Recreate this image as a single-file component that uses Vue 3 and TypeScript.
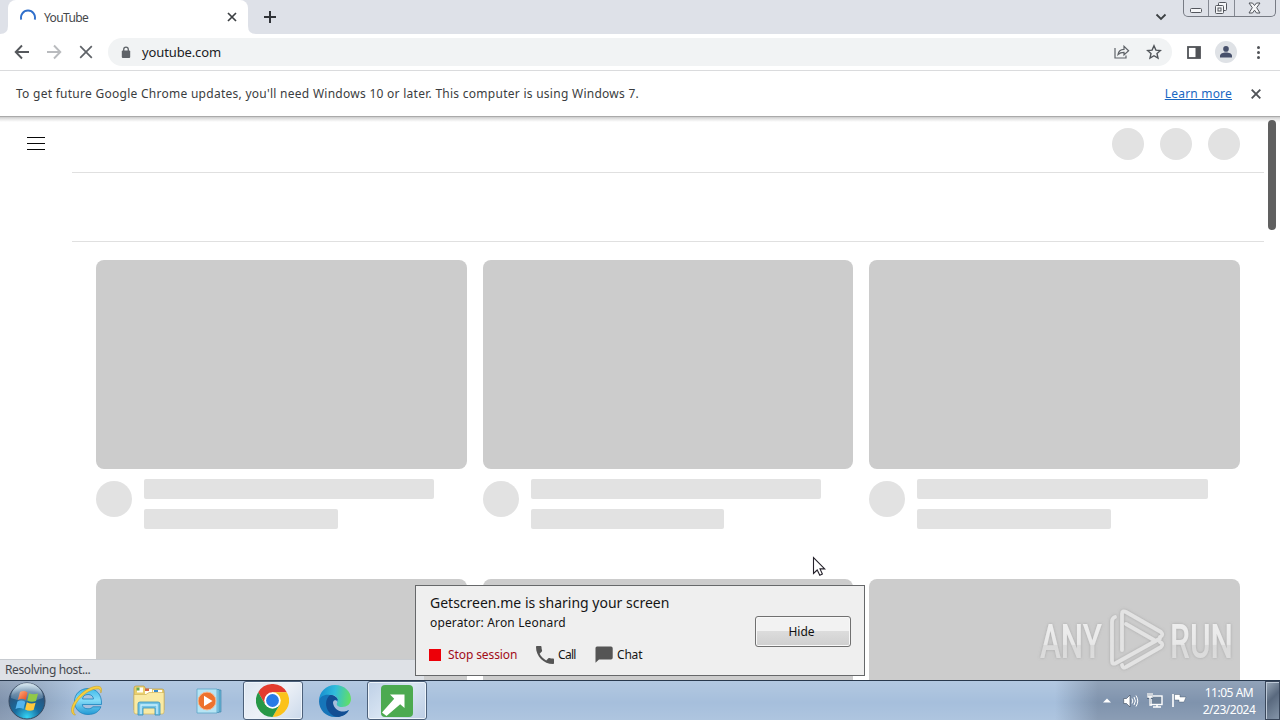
<script setup lang="ts">
interface Video { id: number }
const rows: Video[][] = [
  [{ id: 1 }, { id: 2 }, { id: 3 }],
  [{ id: 4 }, { id: 5 }, { id: 6 }],
]
const avatars = [1, 2, 3]
</script>

<template>
  <div class="desktop">
    <header class="tabstrip">
      <div class="tab">
        <svg class="spinner" width="16" height="16" viewBox="0 0 16 16"><path d="M1.3 11.2A7 7 0 1 1 14.7 11.2" transform="translate(0 -.6)" fill="none" stroke="#2f6fcb" stroke-width="1.9" /></svg>
        <span class="tab-title">YouTube</span>
        <svg class="tab-close" width="10" height="10" viewBox="0 0 10 10"><path d="M1 1l8 8M9 1L1 9" stroke="#3c4043" stroke-width="1.7" /></svg>
        <svg class="tab-foot" width="8" height="8" viewBox="0 0 8 8"><path d="M0 0Q0 8 8 8H0Z" fill="#fff" /></svg>
        <svg class="tab-foot left" width="8" height="8" viewBox="0 0 8 8"><path d="M8 0Q8 8 0 8H8Z" fill="#fff" /></svg>
      </div>
      <svg class="plus" width="12" height="12" viewBox="0 0 12 12"><path d="M6 0v12M0 6h12" stroke="#303338" stroke-width="2" /></svg>
      <svg class="chevron" width="12" height="8" viewBox="0 0 12 8"><path d="M1.5 1.5L6 6l4.500-4.500" fill="none" stroke="#3c4043" stroke-width="1.8" /></svg>
      <div class="caption">
        <span class="cap min"><svg width="12" height="6" viewBox="0 0 12 6"><rect x=".5" y=".5" width="11" height="4" rx="1" fill="#f5f6f8" stroke="#53565d" /></svg></span>
        <span class="cap max"><svg width="14" height="14" viewBox="0 0 14 14"><g fill="#f5f6f8" stroke="#53565d"><rect x="4.500" y="1.500" width="8" height="8" rx="1" /><rect x="1.500" y="4.500" width="8" height="8" rx="1" /><rect x="4" y="7" width="3" height="3" /></g></svg></span>
        <span class="cap cls"><svg width="13" height="12" viewBox="0 0 13 12"><path d="M1 1h3.500l2 2.500 2-2.500H12L8.700 5.700 12 11H8.500l-2-2.800-2 2.800H1l3.300-5.300z" fill="#f5f6f8" stroke="#53565d" /></svg></span>
      </div>
    </header>

    <nav class="toolbar">
      <svg class="nav-icon" width="16" height="16" viewBox="0 0 16 16"><path d="M15 8H2M8 1.500L1.700 8 8 14.500" fill="none" stroke="#55585c" stroke-width="1.9" /></svg>
      <svg class="nav-icon" width="16" height="16" viewBox="0 0 16 16"><path d="M1 8h13M8 1.500L14.300 8 8 14.500" fill="none" stroke="#b9bbbe" stroke-width="1.9" /></svg>
      <svg class="nav-icon" width="16" height="16" viewBox="0 0 16 16"><path d="M2.200 2.200l11.600 11.600M13.800 2.200L2.200 13.800" stroke="#5f6368" stroke-width="1.700" /></svg>
      <div class="omnibox">
        <svg class="lock" width="10" height="13" viewBox="0 0 10 13"><rect x=".8" y="4.500" width="8.400" height="7.500" rx="1" fill="#5f6368" /><path d="M2.700 5V3.400a2.300 2.300 0 0 1 4.600 0V5" fill="none" stroke="#5f6368" stroke-width="1.300" /></svg>
        <span class="url">youtube.com</span>
        <svg class="share" width="16" height="14" viewBox="0 0 16 14"><path d="M1 3v10h11v-2.500M4 9.500C4.500 6 6.500 4.500 10 4.400V1.300l4.600 4.500L10 10V7.300C7.300 7.300 5.500 8 4 9.500z" fill="none" stroke="#5f6368" stroke-width="1.200" /></svg>
        <svg class="star" width="16" height="16" viewBox="0 0 16 16"><path d="M8 1.800l1.900 4.300 4.600.4-3.500 3.100 1 4.500L8 11.700l-4 2.400 1-4.500-3.500-3.100 4.600-.4z" fill="none" stroke="#505459" stroke-width="1.400" /></svg>
      </div>
      <svg class="panel" width="14" height="13" viewBox="0 0 14 13"><rect x="1" y="1" width="12" height="11" fill="#fff" stroke="#505357" stroke-width="1.800" /><path d="M8.500 1H13v11H8.500z" fill="#505357" /></svg>
      <span class="profile"><svg width="12" height="12" viewBox="0 0 12 12"><circle cx="6" cy="2.900" r="2.800" fill="#47506b" /><path d="M0 11.500V10c0-2.300 3-3.400 6-3.400s6 1.100 6 3.400v1.500z" fill="#47506b" /></svg></span>
      <span class="dots"><i></i><i></i><i></i></span>
    </nav>

    <section class="infobar">
      <span class="notice">To get future Google Chrome updates, you'll need Windows 10 or later. This computer is using Windows 7.</span>
      <a class="learn">Learn more</a>
      <svg width="10" height="10" viewBox="0 0 10 10"><path d="M.7.700l8.600 8.600M9.300.700L.7 9.300" stroke="#505357" stroke-width="1.900" /></svg>
    </section>

    <main class="page">
      <div class="masthead">
        <span class="burger"><i></i><i></i><i></i></span>
        <div class="avatars"><span v-for="a in avatars" :key="a"></span></div>
      </div>
      <div class="chips"></div>
      <div v-for="(row, r) in rows" :key="r" class="videos">
        <article v-for="v in row" :key="v.id">
          <div class="thumb"></div>
          <div class="meta">
            <span class="channel"></span>
            <div class="lines"><span class="line"></span><span class="line short"></span></div>
          </div>
        </article>
      </div>
      <div class="scroll-thumb"></div>
      <div class="status"><span>Resolving host...</span></div>
      <svg class="watermark" width="210" height="76" viewBox="0 0 210 76">
        <defs>
          <linearGradient id="wm" x1="0" y1="0" x2="0" y2="1"><stop offset="0" stop-color="#f0f0f0" /><stop offset=".55" stop-color="#e8e8e8" /><stop offset=".57" stop-color="#dadada" /><stop offset="1" stop-color="#dedede" /></linearGradient>
          <filter id="wms" x="-10%" y="-10%" width="120%" height="120%"><feDropShadow dx="0" dy="0" stdDeviation="1.500" flood-color="#888" flood-opacity=".55" /></filter>
        </defs>
        <g filter="url(#wms)">
          <text x="9" y="55" textLength="62" lengthAdjust="spacingAndGlyphs" fill="url(#wm)">ANY</text>
          <text x="139" y="55" textLength="63" lengthAdjust="spacingAndGlyphs" fill="url(#wm)">RUN</text>
          <path d="M84 14Q81 15 81 19V58Q81 62 85 60L129 35.500M91 47V11Q91 7 95 9L130 29Q133 32 129 34M95 21L123 37M91 62Q92 66 95 64L130 44Q133 41 129 39" fill="none" stroke="#e3e3e3" stroke-width="3.800" stroke-linejoin="round" stroke-linecap="round" />
        </g>
      </svg>
      <svg class="cursor" width="14" height="22" viewBox="0 0 14 22"><path d="M1.500 1.500v16l3.700-3.500 2.600 5.300 2.600-1.200L8 12.900h4.700z" fill="#fff" stroke="#25222b" stroke-width="1.100" /></svg>
      <aside class="share-panel">
        <div class="panel-info">
          <div class="panel-title">Getscreen.me is sharing your screen</div>
          <div class="operator">operator: Aron Leonard</div>
          <div class="actions">
            <span class="stop-box"></span><span class="stop-text">Stop session</span>
            <svg class="phone" width="18" height="18" viewBox="3 3 18 18"><path d="M6.620 10.790c1.440 2.830 3.760 5.140 6.590 6.590l2.200-2.200c.27-.27.670-.36 1.020-.24 1.120.37 2.330.57 3.570.57.550 0 1 .45 1 1V20c0 .55-.45 1-1 1-9.390 0-17-7.610-17-17 0-.55.450-1 1-1h3.500c.55 0 1 .45 1 1 0 1.250.2 2.450.57 3.570.11.350.03.740-.25 1.020z" fill="#555" /></svg>
            <span class="call-text">Call</span>
            <svg class="bubble" width="18" height="17" viewBox="0 0 18 17"><path d="M2 .500h14a1.700 1.700 0 0 1 1.700 1.700v9.600a1.700 1.700 0 0 1-1.700 1.700H4L.5 16.700V2A1.500 1.500 0 0 1 2 .500z" fill="#555" /></svg>
            <span class="chat-text">Chat</span>
          </div>
        </div>
        <button class="hide-btn"><span>Hide</span></button>
      </aside>
    </main>

    <footer class="taskbar">
      <div class="slot start">
        <svg width="38" height="38" viewBox="0 0 38 38">
          <defs>
            <radialGradient id="orb" cx=".5" cy=".95" r=".9"><stop offset="0" stop-color="#35d5f5" /><stop offset=".4" stop-color="#176c9f" /><stop offset=".8" stop-color="#2b527a" /><stop offset="1" stop-color="#8fb0c8" /></radialGradient>
            <linearGradient id="gloss" x1="0" y1="0" x2="0" y2="1"><stop offset="0" stop-color="#e9f5fb" stop-opacity=".8" /><stop offset="1" stop-color="#9ab8cf" stop-opacity=".25" /></linearGradient>
            <linearGradient id="wr" x1="0" y1="0" x2="1" y2="1"><stop offset="0" stop-color="#ffb080" /><stop offset="1" stop-color="#e7471a" /></linearGradient>
          </defs>
          <circle cx="19" cy="19" r="18" fill="url(#orb)" stroke="#39495f" />
          <path d="M3 16A16 15 0 0 1 35 16Q19 23 3 16z" fill="url(#gloss)" />
          <path d="M12 10q4-2 7.500.5L17.800 18q-4-2.300-8 0z" fill="url(#wr)" />
          <path d="M21 11.200q4 2 9 .4L28 19q-4.500 1.600-8.700-.5z" fill="#91c947" />
          <path d="M9.400 19.500q4-2 8 .3l-1.900 7.300q-4-2.400-8 0z" fill="#54b4ed" />
          <path d="M18.800 20.200q4.400 2.100 8.800.5l-2 7.300q-4.400 1.600-8.500-.5z" fill="#fec83c" />
        </svg>
      </div>
      <div class="slot">
        <svg width="34" height="34" viewBox="0 0 34 34">
          <defs><linearGradient id="ie" x1="0" y1="0" x2="0" y2="1"><stop offset="0" stop-color="#3eb9ea" /><stop offset=".45" stop-color="#86dcf8" /><stop offset="1" stop-color="#229ad5" /></linearGradient></defs>
          <path d="M31.500 20.500H12.300c.3 3 2.600 4.300 5.700 4.300 2.200 0 4-.8 4.900-2h8C28.800 28 24.500 30.500 18 30.500 10 30.500 4.500 25 4.500 17.500S10.200 4.500 18 4.500c8.500 0 14 6 13.500 16zM12.500 15h11c-.3-3-2.300-4.500-5.400-4.500-3.200 0-5.300 1.500-5.600 4.500z" fill="url(#ie)" stroke="#1c82bd" stroke-width=".8" />
          <path d="M5.500 31C1 31.500-.8 24 6 15.500 12 7 23 .7 29.500 2.500c2.500.8 2.500 4 1.300 6.500.2-3-1-4.600-4-4.200C19.500 5.700 11.500 11.500 7 18c-4 6-4.500 10-1.500 13z" fill="#f7cf3e" stroke="#c99a18" stroke-width=".5" />
        </svg>
      </div>
      <div class="slot">
        <svg width="34" height="32" viewBox="0 0 34 32">
          <path d="M2 3q0-2 2-2h8l2 3h16q2 0 2 2v19H2z" fill="#e9cf6d" stroke="#bc9c45" stroke-width=".7" />
          <path d="M5 2.500h6v5H5zM13 4h7v5h-7zM21 5h9v5h-9z" fill="#fffdf4" />
          <path d="M4.500 2.500h3v3h-3z" fill="#65a94d" /><path d="M13 3.500h4v2.500h-4z" fill="#d36342" /><path d="M22 5h4v2h-4z" fill="#398bc8" />
          <path d="M2 9.500h12l3-2h15V27q0 2-2 2H4q-2 0-2-2z" fill="#f9eaa4" stroke="#d1b45b" stroke-width=".7" />
          <path d="M6 30V19q0-2 2-2h18q2 0 2 2v11h-5v-7H11v7z" fill="#75c4e4" stroke="#398fb8" stroke-width=".8" /><path d="M9 29v-9h16v9" fill="none" stroke="#c9efff" stroke-width="1.300" />
        </svg>
      </div>
      <div class="slot">
        <svg width="30" height="28" viewBox="0 0 30 28">
          <path d="M7 3h18v22H7z" fill="#68b4d5" stroke="#3b80a5" stroke-width=".6" /><path d="M4 2.500h19v23H4z" fill="#8bd0ea" stroke="#438eb4" stroke-width=".7" /><path d="M1 2h20v24H1z" fill="#b6e4f4" stroke="#5aa5c8" stroke-width=".8" />
          <circle cx="11" cy="14" r="8.900" fill="#ed722d" stroke="#f6b58d" /><path d="M8 8.700v10.600l8.500-5.300z" fill="#fff" />
        </svg>
      </div>
      <div class="slot active">
        <svg width="33" height="33" viewBox="0 0 48 48"><path d="M3.200 12A24 24 0 0 1 44.800 12H24L13.600 30z" fill="#e33b2e" /><path d="M44.800 12A24 24 0 0 1 24 48L34.400 30 24 12z" fill="#fbc21b" /><path d="M24 48A24 24 0 0 1 3.200 12L13.600 30H34.400z" fill="#279847" /><circle cx="24" cy="24" r="12" fill="#fff" /><circle cx="24" cy="24" r="9.300" fill="#287be6" /></svg>
      </div>
      <div class="slot">
        <svg width="34" height="34" viewBox="0 0 34 34">
          <defs><linearGradient id="edge" x1="0" y1=".3" x2="1" y2=".4"><stop offset="0" stop-color="#178dd0" /><stop offset=".5" stop-color="#30bddb" /><stop offset="1" stop-color="#62df65" /></linearGradient></defs>
          <path d="M1 17C1 8 8 1 17 1c10 0 16 7 16 14 0 5-4 8-9 8-4 0-6-2-5-4 2-3 0-8-6-8C7 11 2 14 1 17z" fill="url(#edge)" />
          <path d="M1 17c1-5 6-7 11-6 5 0 8 4 8 7-2-3-6-2-7 1-1 6 5 11 11 10l7-3c-3 5-8 7-14 7C8 33 1 26 1 17z" fill="#1675b9" />
          <path d="M12 11c-5 4-5 12-1 17 2 3 6 5 10 5 4-1 8-3 10-7-7 4-15 0-16-7 0-3 2-4 5-3-1-3-4-5-8-5z" fill="#124e93" />
        </svg>
      </div>
      <div class="slot active getscreen">
        <svg width="32" height="32" viewBox="0 0 32 32"><rect width="32" height="32" rx="4" fill="#4caa50" /><path d="M9 9.500h14.500v13.500l-4.300-3.700L5.500 31 1 27.500 13.200 13.700z" fill="#fff" /></svg>
      </div>
      <div class="tray">
        <svg width="8" height="5" viewBox="0 0 8 5"><path d="M0 4.500L4 .5l4 4z" fill="#fff" /></svg>
        <svg class="speaker" width="16" height="14" viewBox="0 0 16 14"><path d="M.7 4.500h2.800L7 1v12L3.500 9.500H.7z" fill="#fff" stroke="#39475a" stroke-width=".6" /><path d="M9 4.500q1.600 2.500 0 5M11 3q2.800 4 0 8M13 1.500q3.500 5.500 0 11" fill="none" stroke="#fff" /></svg>
        <svg class="network" width="16" height="15" viewBox="0 0 16 15"><rect x="4" y="3" width="11" height="8.500" fill="#71849a" stroke="#fff" stroke-width="1.400" /><path d="M6 14h8M10 12v2" stroke="#fff" stroke-width="1.500" /><path d="M0 0h6v6H4v6H2V6H0z" fill="#5c6e84" /><path d="M1 0v4h4V0M3 0v12h2" fill="none" stroke="#fff" stroke-width="1.400" /></svg>
        <svg class="flag" width="16" height="15" viewBox="0 0 16 15"><path d="M2 1v13" stroke="#fff" stroke-width="1.600" /><path d="M3.500 1.500h5.500V4h6L13 9H8V7H3.500z" fill="#fff" stroke="#3b4b60" stroke-width=".4" /></svg>
        <div class="clock"><span class="time">11:05 AM</span><span class="date">2/23/2024</span></div>
        <div class="show-desktop"></div>
      </div>
    </footer>
  </div>
</template>

<style>
body { margin: 0; overflow: hidden; }
</style>

<style scoped>
.desktop { width: 1280px; height: 720px; overflow: hidden; display: flex; flex-direction: column; background: #fff; font-family: "Noto Sans", "Open Sans", sans-serif; font-size: 12px; white-space: nowrap; }
.desktop * { box-sizing: border-box; }
svg { display: block; flex: none; }
.tabstrip { height: 34px; flex: none; display: flex; align-items: flex-start; background: #dee1e8; padding-left: 8px; }
.tab { position: relative; width: 240px; height: 34px; background: #fff; border-radius: 8px 8px 0 0; display: flex; align-items: center; padding: 0 11px 0 12px; }
.tab-title { margin-left: 8px; color: #45474a; font-size: 12px; letter-spacing: -.62px; }
.tab-close { margin-left: auto; }
.tab-foot { position: absolute; right: -8px; bottom: 0; }
.tab-foot.left { right: auto; left: -8px; }
.plus { margin: 11px 0 0 16px; }
.chevron { margin: 13px 16px 0 auto; }
.caption { width: 93px; height: 17px; display: flex; border: 1px solid #777b84; border-top: 0; border-radius: 0 0 5px 5px; margin-right: 4px; }
.cap { display: flex; justify-content: center; align-items: center; border-right: 1px solid #858992; }
.min { width: 25px; padding-top: 5px; }
.max { width: 26px; padding-right: 2px; }
.cls { flex: 1; border: 0; padding-right: 2px; }
.toolbar { height: 37px; flex: none; display: flex; align-items: center; border-bottom: 1px solid #dadbdd; padding: 0 14px; }
.nav-icon { margin-right: 16px; }
.omnibox { width: 1064px; height: 28px; border-radius: 14px; background: #f1f3f4; display: flex; align-items: center; padding: 0 10px 0 13px; margin-left: -2px; }
.url { margin-left: 11px; color: #202124; font-size: 13px; letter-spacing: -.12px; }
.share { margin-left: auto; margin-right: 16px; }
.panel { margin-left: 15px; }
.profile { width: 22px; height: 22px; border-radius: 50%; background: #dfe2e6; display: flex; align-items: center; justify-content: center; margin-left: 14px; }
.dots { display: grid; gap: 2px; margin-left: auto; margin-right: 6px; }
.dots i { width: 3px; height: 3px; border-radius: 50%; background: #505357; }
.infobar { height: 45px; flex: none; display: flex; align-items: center; padding: 0 19px 0 16px; color: #3b3d40; font-size: 12px; }
.notice { letter-spacing: .268px; }
.learn { color: #1867c2; text-decoration: underline; margin-left: auto; margin-right: 19px; letter-spacing: .2px; }
.page { height: 564px; flex: none; position: relative; overflow: hidden; background: linear-gradient(#aaa 0 1px, #ccc 1px, #e5e5e5 3px, #fff 6px); padding-top: 1px; }
.masthead { height: 56px; width: 1192px; margin-left: 72px; border-bottom: 1px solid #e0e0e0; display: flex; align-items: center; justify-content: space-between; padding-bottom: 1px; }
.burger { margin: 0 0 2px -45px; display: grid; gap: 5px; }
.burger i { display: block; width: 18px; height: 1px; background: #080808; }
.avatars { display: flex; gap: 16px; margin-right: 24px; }
.avatars span { width: 32px; height: 32px; background: #e2e2e2; border-radius: 50%; }
.chips { width: 1192px; height: 69px; margin-left: 72px; border-bottom: 1px solid #e0e0e0; }
.videos { width: 1144px; height: 319px; margin-left: 96px; padding-top: 18px; display: grid; grid-template-columns: repeat(3, 1fr); gap: 16px; }
.thumb { height: 209px; border-radius: 8px; background: #ccc; }
.meta { display: flex; margin-top: 10px; }
.channel { width: 36px; height: 36px; border-radius: 50%; background: #e2e2e2; margin: 2px 12px 0 0; }
.lines { width: 322.500px; display: grid; gap: 10px; }
.line { height: 20px; width: 90%; background: #e2e2e2; border-radius: 2px; }
.line.short { width: 60%; }
.scroll-thumb { position: absolute; right: 4px; top: 4px; width: 8px; height: 110px; border-radius: 4px; background: #606060; }
.status { position: absolute; left: 0; bottom: 0; width: 424px; height: 21px; background: #dee1e6; border-top: 1px solid #c7cbd0; color: #45484d; font-size: 12px; line-height: 20px; padding-left: 5px; letter-spacing: -.38px; }
.watermark { position: absolute; left: 1031px; top: 487px; overflow: visible; }
.watermark text { font-family: Roboto, sans-serif; font-size: 49px; font-weight: 500; }
.cursor { position: absolute; left: 812px; top: 440px; }
.share-panel { position: absolute; left: 415px; top: 469px; width: 450px; height: 91px; background: #efefef; border: 1px solid #66686a; display: flex; color: #151515; font-size: 12px; padding: 0 13px 0 13px; }
.panel-info { flex: 1; padding-top: 8px; }
.panel-title { font-size: 14px; line-height: 18px; padding-left: 1px; }
.operator { line-height: 18px; margin-top: 2px; padding-left: 1px; letter-spacing: .15px; }
.actions { display: flex; align-items: center; margin-top: 13px; height: 19px; }
.stop-box { width: 12px; height: 12px; background: #ed0008; }
.stop-text { color: #a20c18; width: 88px; margin-left: 7px; letter-spacing: -.1px; }
.call-text { width: 37px; margin-left: 4px; letter-spacing: -.7px; }
.chat-text { margin-left: 4px; letter-spacing: -.2px; }
.hide-btn { margin: 30px 0 0; width: 96px; height: 31px; padding: 0 3px 0 0; color: #111; font: inherit; border: 1px solid #707070; border-radius: 3px; background: linear-gradient(#f2f2f2 0 47%, #dcdcdc 50%, #cfcfcf); box-shadow: inset 0 0 0 1px #f8f8f8; }
.taskbar { height: 40px; flex: none; display: flex; background: linear-gradient(#ffffff25, #ffffff00 55%, #ffffff18), linear-gradient(90deg, #8093ad 0, #8da3be 38px, #a6bfdc 80px, #a6bfdc 1055px, #7f93ad 1098px, #7f93ad); border-top: 1px solid #28384c; }
.slot { width: 62px; height: 39px; display: flex; align-items: center; justify-content: center; }
.start { width: 56px; padding-right: 2px; }
.active { width: 60px; margin: 0 1px; padding-right: 1px; border: 1px solid #4c607a; border-radius: 3px; background: linear-gradient(135deg, #dce5f0, #edf1f7 50%, #cbd9eb); box-shadow: inset 0 0 0 1px #edf4fb; }
.active.getscreen { background: linear-gradient(135deg, #bed0e6, #d9e5f3 50%, #bccde4); }
.tray { margin-left: auto; display: flex; align-items: center; color: #fff; }
.speaker { margin-left: 12px; }
.network { margin-left: 8px; }
.flag { margin-left: 8px; }
.clock { width: 62px; margin-left: 11px; text-align: center; display: grid; line-height: 17px; font-size: 12px; letter-spacing: -.48px; }
.show-desktop { width: 15px; height: 39px; margin-left: 5px; border: 1px solid #39475b; background: linear-gradient(135deg, #9aa9b9, #59697e 45%, #8495a9); box-shadow: inset 1px 1px #bdc9d7; }
</style>
